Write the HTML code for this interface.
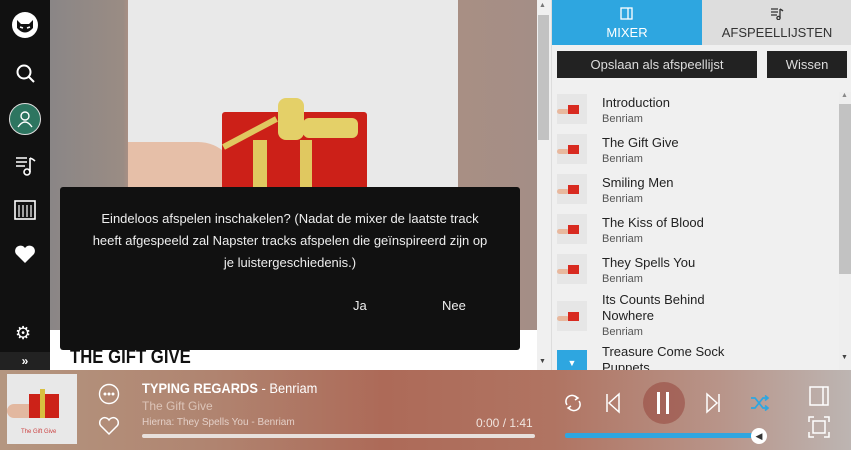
<!DOCTYPE html>
<html><head><meta charset="utf-8"><style>
*{margin:0;padding:0;box-sizing:border-box}
body{width:851px;height:450px;overflow:hidden;font-family:"Liberation Sans",sans-serif;position:relative;background:#fff}
.abs{position:absolute}
#side{left:0;top:0;width:50px;height:370px;background:#111}
#main{left:50px;top:0;width:487px;height:330px;background:linear-gradient(90deg,#8a8686 0%,#9a8c84 15%,#a88f84 16%,#a88f84 84%,#a48e86 100%)}
#img{left:128px;top:0;width:330px;height:330px;background:#e9e9e9;overflow:hidden}
#strip{left:50px;top:330px;width:487px;height:40px;background:#fff}
#dlg{left:60px;top:187px;width:460px;height:163px;background:#111;border-radius:3px;color:#eee;font-size:13px;text-align:center;line-height:22px}
#vs{left:537px;top:0;width:14px;height:370px;background:#f0f0f0}
#rp{left:551px;top:0;width:300px;height:370px;background:#f0f0f0;border-left:1px solid #ddd}
.tab{position:absolute;top:0;height:45px;text-align:center;font-size:13px;padding-top:25px}
.btn{position:absolute;top:51px;height:27px;background:#222;color:#ddd;font-size:13px;text-align:center;line-height:27px}
.item{position:absolute;left:5px;width:280px}
.th{position:absolute;left:0;top:0;width:30px;height:30px;background:#e6e6e6;overflow:hidden}
.th i{position:absolute;left:11px;top:11px;width:11px;height:9px;background:#d82a20}
.th b{position:absolute;left:0;top:15px;width:12px;height:5px;background:#e8b89e;border-radius:3px}
.t{position:absolute;left:45px;top:1px;font-size:13px;color:#222;line-height:16px}
.a{font-size:11px;color:#555;line-height:16px;display:block}
#bar{left:0;top:370px;width:851px;height:80px;background:linear-gradient(90deg,#b49680 0%,#b08470 25%,#ad6a58 45%,#b07462 65%,#b8958a 85%,#bdb5b2 100%)}
.nar{font-family:"Liberation Sans Narrow","Liberation Sans",sans-serif}
</style></head><body>
<div id="side" class="abs">
<svg class="abs" style="left:10px;top:10px" width="30" height="30" viewBox="0 0 30 30"><circle cx="15" cy="15" r="13" fill="#fff"/><path d="M7 10 L11 14 L19 14 L23 10 L23 18 Q15 27 7 18Z" fill="#111"/><path d="M10 17 L13 18 M20 17 L17 18" stroke="#fff" stroke-width="1.5"/></svg>
<svg class="abs" style="left:14px;top:62px" width="22" height="22" viewBox="0 0 22 22" fill="none" stroke="#fff" stroke-width="2"><circle cx="10" cy="10" r="6.5"/><path d="M15 15 L20 20"/></svg>
<div class="abs" style="left:9px;top:103px;width:32px;height:32px;border-radius:50%;background:#2d7560;border:1.5px solid #ddd"></div>
<svg class="abs" style="left:15px;top:109px" width="20" height="20" viewBox="0 0 20 20" fill="none" stroke="#fff" stroke-width="1.4"><circle cx="10" cy="7" r="4"/><path d="M3 18 Q10 8 17 18"/></svg>
<svg class="abs" style="left:15px;top:155px" width="22" height="22" viewBox="0 0 22 22" fill="none" stroke="#fff" stroke-width="1.6"><path d="M1 3H12M1 7H12M1 11H10M15 3V17M15 3Q18 4 20 6"/><circle cx="12" cy="17" r="3"/></svg>
<svg class="abs" style="left:14px;top:200px" width="22" height="20" viewBox="0 0 22 20" fill="none" stroke="#fff" stroke-width="1.6"><rect x="1" y="1" width="20" height="18"/><path d="M5 5V17M9 5V17M13 5V17M17 5V17" stroke-width="1.2"/></svg>
<svg class="abs" style="left:14px;top:244px" width="22" height="20" viewBox="0 0 22 20"><path d="M11 19 L2 10 A5 5 0 0 1 11 4 A5 5 0 0 1 20 10Z" fill="#fff"/></svg>
<div class="abs" style="left:15px;top:323px;color:#fff;font-size:18px">⚙</div>
<div class="abs" style="left:0;top:352px;width:50px;height:18px;background:#222;color:#fff;font-size:12px;text-align:center;line-height:18px;font-weight:bold">»</div>
</div>
<div id="main" class="abs"></div>
<div id="img" class="abs">
<div class="abs" style="left:-10px;top:142px;width:120px;height:60px;background:#e6bfa8;border-radius:10px 40px 0 0"></div>
<div class="abs" style="left:94px;top:112px;width:145px;height:80px;background:#cc2018;border-radius:3px"></div>
<div class="abs" style="left:92px;top:130px;width:60px;height:6px;background:#e0c860;transform:rotate(-28deg)"></div>
<div class="abs" style="left:125px;top:140px;width:14px;height:50px;background:#e0c860"></div>
<div class="abs" style="left:172px;top:140px;width:12px;height:50px;background:#e0c860"></div>
<div class="abs" style="left:150px;top:98px;width:26px;height:42px;background:#e4d068;border-radius:8px"></div>
<div class="abs" style="left:175px;top:118px;width:55px;height:20px;background:#e4d068;border-radius:6px"></div>
</div>
<div id="strip" class="abs"><div class="abs nar" style="left:20px;top:17px;font-size:19px;color:#111;font-weight:bold;transform:scaleX(.88);transform-origin:left">THE GIFT GIVE</div></div>
<div id="dlg" class="abs"><div style="padding-top:21px">Eindeloos afspelen inschakelen? (Nadat de mixer de laatste track<br>heeft afgespeeld zal Napster tracks afspelen die geïnspireerd zijn op<br>je luistergeschiedenis.)</div>
<div class="abs" style="left:293px;top:108px">Ja</div><div class="abs" style="left:382px;top:108px">Nee</div></div>
<div id="vs" class="abs"><div class="abs" style="left:1px;top:15px;width:11px;height:125px;background:#c2c2c2"></div><div class="abs" style="left:2px;top:2px;font-size:7px;color:#777">▲</div><div class="abs" style="left:2px;top:358px;font-size:7px;color:#444">▼</div></div>
<div id="rp" class="abs">
<div class="tab" style="left:0;width:150px;background:#2ea6e0;color:#fff">MIXER</div>
<svg class="abs" style="left:68px;top:7px" width="13" height="13" viewBox="0 0 13 13" fill="none" stroke="#fff" stroke-width="1.3"><rect x="1" y="1" width="11" height="11"/><path d="M8 1V12"/></svg>
<div class="tab" style="left:150px;width:150px;background:#ddd;color:#333">AFSPEELLIJSTEN</div>
<svg class="abs" style="left:218px;top:7px" width="14" height="13" viewBox="0 0 14 13" fill="none" stroke="#333" stroke-width="1.3"><path d="M1 2H8M1 5H8M1 8H7M10 2V11M10 2Q12 3 13 4"/><circle cx="8.5" cy="11" r="1.6"/></svg>
<div class="btn" style="left:5px;width:200px">Opslaan als afspeellijst</div>
<div class="btn" style="left:215px;width:80px">Wissen</div>
<div class="abs" style="left:287px;top:92px;width:12px;height:278px;background:#eee"><div class="abs" style="left:0;top:12px;width:12px;height:170px;background:#c2c2c2"></div><div class="abs" style="left:2px;top:0;font-size:7px;color:#888">▲</div><div class="abs" style="left:2px;top:262px;font-size:7px;color:#444">▼</div></div>
<div class="item" style="top:94px"><div class="th"><b></b><i></i></div><div class="t">Introduction<span class="a">Benriam</span></div></div>
<div class="item" style="top:134px"><div class="th"><b></b><i></i></div><div class="t">The Gift Give<span class="a">Benriam</span></div></div>
<div class="item" style="top:174px"><div class="th"><b></b><i></i></div><div class="t">Smiling Men<span class="a">Benriam</span></div></div>
<div class="item" style="top:214px"><div class="th"><b></b><i></i></div><div class="t">The Kiss of Blood<span class="a">Benriam</span></div></div>
<div class="item" style="top:254px"><div class="th"><b></b><i></i></div><div class="t">They Spells You<span class="a">Benriam</span></div></div>
<div class="item" style="top:301px"><div class="th"><b></b><i></i></div><div class="t" style="top:-9px">Its Counts Behind<br>Nowhere<span class="a">Benriam</span></div></div>
<div class="item" style="top:350px"><div class="th" style="background:#2ea6e0;color:#fff;font-size:9px;text-align:center;line-height:26px">▼</div><div class="t" style="top:-6px">Treasure Come Sock<br>Puppets</div></div>
</div>
<div id="bar" class="abs">
<div class="abs" style="left:7px;top:4px;width:70px;height:70px;background:#e8e8e8;overflow:hidden"><div class="abs" style="left:0;top:30px;width:30px;height:14px;background:#e2b8a0;border-radius:8px"></div><div class="abs" style="left:22px;top:20px;width:30px;height:24px;background:#cc2218"></div><div class="abs" style="left:33px;top:15px;width:5px;height:29px;background:#d8c040"></div><div class="abs" style="left:14px;top:55px;font-size:6px;color:#c44">The Gift Give</div></div>
<svg class="abs" style="left:98px;top:13px" width="22" height="22" viewBox="0 0 22 22" fill="none" stroke="#fff" stroke-width="1.4"><circle cx="11" cy="11" r="9.5"/><circle cx="7" cy="11" r=".8" fill="#fff"/><circle cx="11" cy="11" r=".8" fill="#fff"/><circle cx="15" cy="11" r=".8" fill="#fff"/></svg>
<svg class="abs" style="left:98px;top:46px" width="22" height="20" viewBox="0 0 22 20" fill="none" stroke="#fff" stroke-width="1.5"><path d="M11 18 L2.5 9.5 A4.8 4.8 0 0 1 11 4 A4.8 4.8 0 0 1 19.5 9.5Z"/></svg>
<div class="abs nar" style="left:142px;top:10px;font-size:14px;color:#fff;transform:scaleX(.92);transform-origin:left;white-space:nowrap"><b>TYPING REGARDS</b> - Benriam</div>
<div class="abs" style="left:142px;top:29px;font-size:12px;color:#dcc4b8">The Gift Give</div>
<div class="abs" style="left:142px;top:47px;font-size:10px;color:#e4d0c8">Hierna: They Spells You - Benriam</div>
<div class="abs" style="left:476px;top:46px;font-size:12px;color:#f0e4de">0:00 / 1:41</div>
<div class="abs" style="left:142px;top:64px;width:393px;height:4px;background:#e8e0dc;border-radius:2px"></div>
<svg class="abs" style="left:564px;top:23px" width="18" height="20" viewBox="0 0 18 20" fill="none" stroke="#fff" stroke-width="1.5"><path d="M3 12 A6 6 0 0 1 13 5 M15 8 A6 6 0 0 1 5 15"/><path d="M11 3L14 5L11 7M7 13L4 15L7 17"/></svg>
<svg class="abs" style="left:604px;top:22px" width="18" height="22" viewBox="0 0 18 22" fill="none" stroke="#fff" stroke-width="1.5"><path d="M3 2V20M15 2L5 11L15 20Z"/></svg>
<div class="abs" style="left:643px;top:12px;width:42px;height:42px;border-radius:50%;background:rgba(150,70,60,.55)"></div>
<div class="abs" style="left:657px;top:22px;width:3px;height:22px;background:#fff"></div><div class="abs" style="left:666px;top:22px;width:3px;height:22px;background:#fff"></div>
<svg class="abs" style="left:704px;top:22px" width="18" height="22" viewBox="0 0 18 22" fill="none" stroke="#fff" stroke-width="1.5"><path d="M15 2V20M3 2L13 11L3 20Z"/></svg>
<svg class="abs" style="left:750px;top:25px" width="20" height="16" viewBox="0 0 20 16" fill="none" stroke="#2ea6e0" stroke-width="1.7"><path d="M1 3H5L13 13H18M1 13H5L13 3H18M15 0.5L18 3L15 5.5M15 10.5L18 13L15 15.5"/></svg>
<div class="abs" style="left:565px;top:63px;width:193px;height:5px;background:#2ea6e0;border-radius:2px"></div>
<div class="abs" style="left:751px;top:58px;width:16px;height:16px;border-radius:50%;background:#fff;font-size:9px;text-align:center;line-height:16px;color:#333">◀</div>
<svg class="abs" style="left:808px;top:15px" width="22" height="22" viewBox="0 0 22 22" fill="none" stroke="#fff" stroke-width="1.5"><rect x="2" y="2" width="18" height="18"/><path d="M15 2V20"/></svg>
<svg class="abs" style="left:808px;top:46px" width="22" height="22" viewBox="0 0 22 22" fill="none" stroke="#fff" stroke-width="1.5"><path d="M1 6V1H6M16 1H21V6M21 16V21H16M6 21H1V16"/><rect x="5" y="5" width="12" height="12"/></svg>
</div>
</body></html>
